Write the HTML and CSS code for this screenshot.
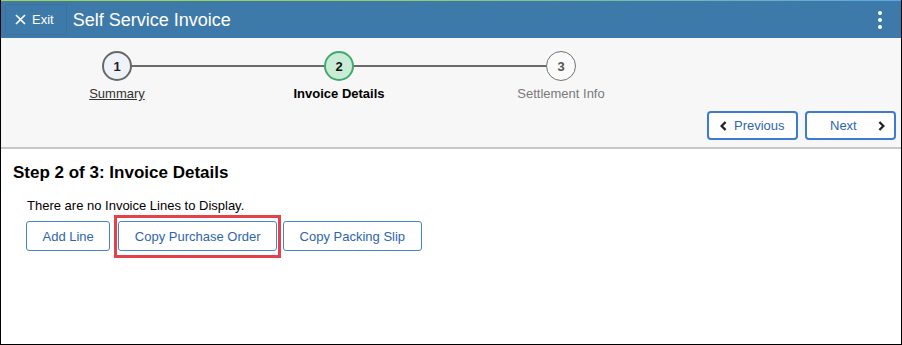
FILE: index.html
```html
<!DOCTYPE html>
<html lang="en">
<head>
    <meta charset="UTF-8">
    <meta name="viewport" content="width=device-width, initial-scale=1.0">
    <title>Self Service Invoice</title>
    <link rel="stylesheet" href="styles.css">
</head>
<body>
    <div class="frame">
        <div class="topline"></div>

        <header class="banner">
            <button class="exit" type="button">
                <svg width="11" height="11" viewBox="0 0 11 11" aria-hidden="true">
                    <path d="M1 1L10 10M10 1L1 10" stroke="#fff" stroke-width="1.7" fill="none"/>
                </svg>
                Exit
            </button>
            <h1>Self Service Invoice</h1>
            <span class="kebab"><i></i><i></i><i></i></span>
        </header>

        <!-- wizard progress + prev/next -->
        <section class="progress">
            <ol class="steps">
                <li class="step done">
                    <span class="dot">1</span>
                    <a href="#" class="label">Summary</a>
                </li>
                <li class="step current">
                    <span class="dot">2</span>
                    <span class="label">Invoice Details</span>
                </li>
                <li class="step todo">
                    <span class="dot">3</span>
                    <span class="label">Settlement Info</span>
                </li>
            </ol>
            <div class="nav">
                <button class="nav-btn prev" type="button">
                    <svg width="7" height="10" viewBox="0 0 7 10" aria-hidden="true">
                        <polyline points="5.6,1 1.6,5 5.6,9" stroke="#222" stroke-width="2.4" fill="none"/>
                    </svg>
                    Previous
                </button>
                <button class="nav-btn next" type="button">
                    Next
                    <svg width="7" height="10" viewBox="0 0 7 10" aria-hidden="true">
                        <polyline points="1.4,1 5.4,5 1.4,9" stroke="#222" stroke-width="2.4" fill="none"/>
                    </svg>
                </button>
            </div>
        </section>

        <main class="content">
            <h2>Step 2 of 3: Invoice Details</h2>
            <p class="empty">There are no Invoice Lines to Display.</p>
            <div class="actions">
                <button class="btn" type="button">Add Line</button>
                <button class="btn marked" type="button">Copy Purchase Order</button>
                <button class="btn" type="button">Copy Packing Slip</button>
            </div>
        </main>
    </div>
</body>
</html>
```

FILE: styles.css
```css
* {
    box-sizing: border-box;
}

body {
    margin: 0;
    font-family: "Liberation Sans", Arial, sans-serif;
    color: #000;
    background: #fff;
}

.frame {
    width: 902px;
    height: 345px;
    border: 1px solid #000;
    border-top: none;
    overflow: hidden;
}

.topline {
    height: 1px;
    background: linear-gradient(to right, #a6d64a, #8fcd6e 45%, #5aa6e6);
}

/* blue title bar */
.banner {
    display: flex;
    align-items: center;
    height: 37px;
    padding: 2px 19px 0 4px;
    background: #3e7aa9;
    color: #fff;
}

.exit {
    display: flex;
    align-items: center;
    gap: 6px;
    height: 31px;
    padding: 0 12px 0 9px;
    border: 1px solid rgba(60, 90, 120, 0.3);
    border-radius: 2px;
    background: transparent;
    color: #fff;
    font-family: inherit;
    font-size: 13px;
    margin-top: -2px;
}

.banner h1 {
    margin: 0 0 0 6px;
    font-size: 18px;
    font-weight: normal;
    flex: 1;
}

.kebab {
    display: flex;
    flex-direction: column;
    gap: 3px;
    margin-top: -2px;
}

.kebab i {
    display: block;
    width: 4px;
    height: 4px;
    border-radius: 50%;
    background: #fff;
}

/* step indicator */
.progress {
    background: #f7f7f7;
    border-bottom: 2px solid #c8c8c8;
    padding: 13px 5px 7px 5px;
}

.steps {
    display: flex;
    margin: 0;
    padding: 0;
    list-style: none;
}

.step {
    position: relative;
    width: 222px;
    display: flex;
    flex-direction: column;
    align-items: center;
}

.step + .step::before {
    content: "";
    position: absolute;
    top: 14px;
    right: 50%;
    width: 100%;
    height: 2px;
    background: #6b6b6b;
}

.dot {
    position: relative;
    z-index: 1;
    width: 30px;
    height: 30px;
    border-radius: 50%;
    display: flex;
    align-items: center;
    justify-content: center;
    font-size: 13px;
    font-weight: bold;
    color: #222;
}

.done .dot {
    background: #eef3fa;
    border: 2px solid #686868;
}

.current .dot {
    background: #c9ecd6;
    border: 2px solid #41ab6d;
    color: #111;
}

.todo .dot {
    background: #fafafa;
    border: 1.5px solid #737373;
    color: #555;
}

.label {
    margin-top: 5px;
    font-size: 13px;
    line-height: 15px;
}

.done .label {
    color: #333;
    text-decoration: underline;
}

.current .label {
    font-weight: bold;
    color: #000;
}

.todo .label {
    color: #7a7a7a;
}

.nav {
    display: flex;
    justify-content: flex-end;
    gap: 7px;
    margin-top: 10px;
}

.nav-btn {
    display: flex;
    align-items: center;
    width: 91px;
    height: 29px;
    border: 2px solid #3d7bd2;
    border-radius: 4px;
    background: #fff;
    color: #2f64b2;
    font-family: inherit;
    font-size: 13px;
}

.prev {
    gap: 7px;
    padding: 0 10px 0 11px;
}

.next {
    justify-content: space-between;
    padding: 0 9px 0 23px;
}

/* page body */
.content {
    padding: 14px 12px 0 12px;
}

.content h2 {
    margin: 0;
    font-size: 17px;
    line-height: 20px;
}

.empty {
    margin: 15px 0 0 14px;
    font-size: 13px;
    line-height: 15px;
}

.actions {
    display: flex;
    margin: 8px 0 0 13px;
    gap: 6px;
}

.btn {
    position: relative;
    height: 30px;
    padding: 0 15.5px;
    border: 1px solid #4884d6;
    border-radius: 3px;
    background: #fff;
    color: #2f64b2;
    font-family: inherit;
    font-size: 13px;
}

.btn.marked {
    margin-left: 2px;
}

/* red callout box around the highlighted action */
.marked::after {
    content: "";
    position: absolute;
    left: -5px;
    right: -5px;
    top: -7px;
    bottom: -8px;
    border: 3px solid #e5414a;
}
```
